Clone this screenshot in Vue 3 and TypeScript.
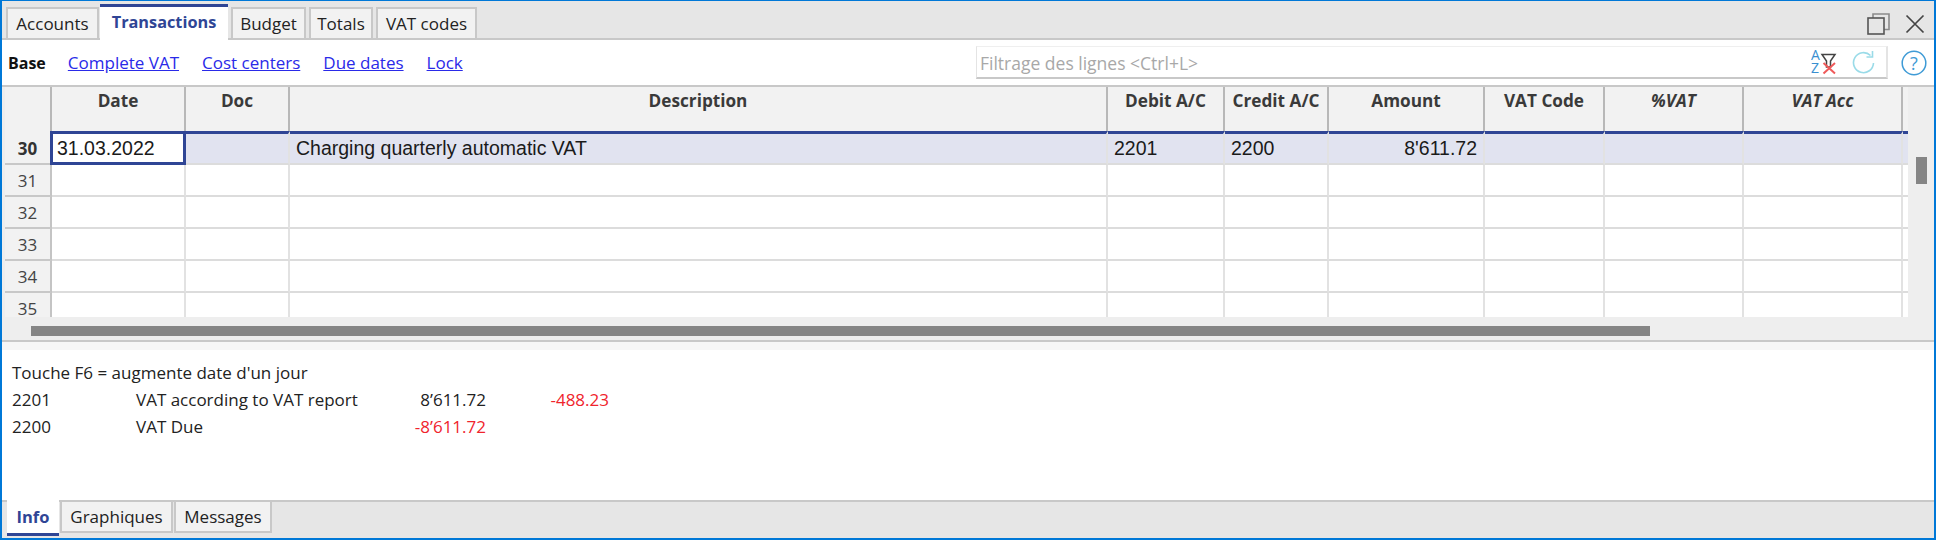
<template>
  <div class="app">
    <div class="tabbar">
      <div class="tabs">
        <div
          v-for="t in topTabs"
          :key="t.name"
          class="tab"
          :class="{ active: t.name === 'Transactions' }"
          :style="{ width: t.w + 'px' }"
        >
          {{ t.name }}
        </div>
      </div>
      <div class="win-icons">
        <svg width="23" height="22" viewBox="0 0 23 22" fill="none">
          <path d="M6 5V1H22V16.5H17" stroke="#8a8a8a" stroke-width="1.6" />
          <rect x="1" y="5" width="16" height="16" stroke="#555" stroke-width="1.6" />
        </svg>
        <svg width="20" height="20" viewBox="0 0 20 20" fill="none">
          <path d="M1.5 1.5L18.5 18.5M18.5 1.5L1.5 18.5" stroke="#444" stroke-width="1.7" />
        </svg>
      </div>
    </div>

    <div class="subnav">
      <b class="base">Base</b>
      <a v-for="l in links" :key="l" class="link">{{ l }}</a>
      <div class="filter">
        <span class="ph">Filtrage des lignes &lt;Ctrl+L&gt;</span>
        <svg class="az" width="26" height="32" viewBox="0 -5 26 32" fill="none">
          <text x="0" y="9" class="az-t">A</text>
          <text x="0" y="22" class="az-t">Z</text>
          <path d="M11 3.5H24L19.5 10V16H15.5V10Z" stroke="#444" stroke-width="1.5" fill="#fff" />
          <path d="M12.5 12L24 22.5M24 12L12.5 22.5" stroke="#ef5a5a" stroke-width="2" />
        </svg>
        <svg class="refresh" width="24" height="24" viewBox="0 0 24 24" fill="none">
          <path d="M18.5 5.5A10 10 0 1 0 21.5 13" stroke="#9adbe8" stroke-width="1.6" />
          <path d="M20.5 1V7H14.5" stroke="#9adbe8" stroke-width="1.6" />
        </svg>
      </div>
      <svg class="help" width="26" height="26" viewBox="0 0 26 26" fill="none">
        <circle cx="13" cy="13" r="11.8" stroke="#3f9bd6" stroke-width="1.5" />
        <text x="13" y="19.5" text-anchor="middle" class="help-t">?</text>
      </svg>
    </div>

    <div class="sheet">
      <div class="sheet-top">
        <div class="table">
          <div class="row head">
            <div class="cell num"></div>
            <div v-for="c in columns" :key="c.label" class="cell" :class="{ it: c.italic }">{{ c.label }}</div>
            <div class="cell tail"></div>
          </div>
          <div class="row current">
            <div class="cell num">30</div>
            <div class="cell date">31.03.2022</div>
            <div class="cell"></div>
            <div class="cell">Charging quarterly automatic VAT</div>
            <div class="cell">2201</div>
            <div class="cell">2200</div>
            <div class="cell right">8'611.72</div>
            <div class="cell"></div>
            <div class="cell"></div>
            <div class="cell"></div>
            <div class="cell tail"></div>
          </div>
          <div v-for="n in emptyRows" :key="n" class="row">
            <div class="cell num">{{ n }}</div>
            <div v-for="c in columns" :key="c.label" class="cell"></div>
            <div class="cell tail"></div>
          </div>
        </div>
        <div class="vscroll"><div class="vthumb"></div></div>
      </div>
      <div class="hscroll"><div class="hthumb"></div></div>
    </div>

    <div class="splitter"></div>

    <div class="info">
      <div class="hint">Touche F6 = augmente date d'un jour</div>
      <div v-for="r in infoRows" :key="r.code" class="info-row">
        <span>{{ r.code }}</span>
        <span>{{ r.desc }}</span>
        <span class="right" :class="{ red: r.amount.startsWith('-') }">{{ r.amount }}</span>
        <span class="right red">{{ r.bal }}</span>
      </div>
    </div>

    <div class="bottom">
      <div
        v-for="t in bottomTabs"
        :key="t.name"
        class="btab"
        :class="{ active: t.name === 'Info' }"
        :style="{ width: t.w + 'px' }"
      >
        {{ t.name }}
      </div>
    </div>
  </div>
</template>

<script setup lang="ts">
const topTabs = [
  { name: 'Accounts', w: 93 },
  { name: 'Transactions', w: 128 },
  { name: 'Budget', w: 75 },
  { name: 'Totals', w: 64 },
  { name: 'VAT codes', w: 101 },
];
const links = ['Complete VAT', 'Cost centers', 'Due dates', 'Lock'];
const columns = [
  { label: 'Date' },
  { label: 'Doc' },
  { label: 'Description' },
  { label: 'Debit A/C' },
  { label: 'Credit A/C' },
  { label: 'Amount' },
  { label: 'VAT Code' },
  { label: '%VAT', italic: true },
  { label: 'VAT Acc', italic: true },
];
const emptyRows = [31, 32, 33, 34, 35];
const infoRows = [
  { code: '2201', desc: 'VAT according to VAT report', amount: '8’611.72', bal: '-488.23' },
  { code: '2200', desc: 'VAT Due', amount: '-8’611.72', bal: '' },
];
const bottomTabs = [
  { name: 'Info', w: 52 },
  { name: 'Graphiques', w: 113 },
  { name: 'Messages', w: 98 },
];
</script>

<style>
html,
body {
  margin: 0;
  background: #fff;
}
</style>

<style scoped>
.app {
  width: 1936px;
  height: 540px;
  box-sizing: border-box;
  border: 2px solid #0078d7;
  border-top-width: 1px;
  display: flex;
  flex-direction: column;
  overflow: hidden;
  background: #fff;
  color: #222;
  font-family: 'Open Sans', 'Noto Sans', sans-serif;
  font-size: 17px;
}
.tabbar {
  height: 39px;
  flex: none;
  box-sizing: border-box;
  background: #e6e6e6;
  border-bottom: 2px solid #c8c8c8;
  display: flex;
  justify-content: space-between;
}
.tabs {
  display: flex;
  align-items: flex-end;
  gap: 3px;
  padding-left: 4px;
}
.tab {
  box-sizing: border-box;
  height: 33px;
  margin-bottom: -2px;
  background: #f2f2f2;
  border: 2px solid #c8c8c8;
  text-align: center;
  line-height: 29px;
  white-space: nowrap;
}
.tab.active {
  height: 36px;
  margin-left: -2px;
  background: #fff;
  border: none;
  border-top: 3px solid #2f4595;
  color: #2f4595;
  font-size: 16.3px;
  font-weight: 700;
  line-height: 31px;
}
.win-icons {
  display: flex;
  align-items: center;
  gap: 15px;
  padding: 8px 9px 0 0;
}
.subnav {
  height: 45px;
  flex: none;
  box-sizing: border-box;
  display: flex;
  align-items: center;
  padding-left: 6px;
}
.base {
  font-size: 16px;
  font-weight: 700;
  color: #111;
  margin-right: 22px;
}
.link {
  color: #2a2ae8;
  text-decoration: underline;
  margin-right: 23px;
}
.filter {
  margin-left: auto;
  width: 912px;
  height: 33px;
  box-sizing: border-box;
  border-top: 1px solid #efefef;
  border-right: 2px solid #e4e4e4;
  border-bottom: 2px solid #c8c8c8;
  border-left: 1px solid #e4e4e4;
  display: flex;
  align-items: center;
  padding-left: 3px;
}
.ph {
  color: #a8a8a8;
  font-size: 17.5px;
  padding-top: 1px;
  flex: 1;
}
.az {
  margin: -2px 15px -2px 0;
}
.az-t {
  font-family: 'Open Sans', sans-serif;
  font-size: 14px;
  fill: #3a8fd0;
}
.refresh {
  margin-right: 10px;
}
.help {
  margin: 0 7px 0 13px;
}
.help-t {
  font-family: 'Open Sans', sans-serif;
  font-size: 18px;
  fill: #3f9bd6;
}
.sheet {
  height: 257px;
  flex: none;
  box-sizing: border-box;
  background: #eee;
  border-top: 2px solid #c8c8c8;
  border-bottom: 2px solid #c8c8c8;
  padding-left: 3px;
}
.sheet-top {
  display: flex;
  height: 230px;
}
.table {
  width: 1903px;
  flex: none;
  overflow: hidden;
  background: #fff;
}
.row {
  display: grid;
  grid-template-columns: 47px 134px 104px 818px 117px 104px 156px 120px 139px 159px 5px;
  grid-template-rows: minmax(0, 1fr);
  height: 32px;
}
.cell {
  box-sizing: border-box;
  border-right: 2px solid #e2e2e2;
  border-bottom: 2px solid #dcdcdc;
  padding: 0 6px;
  line-height: 30px;
  font-family: 'Liberation Sans', Arial, sans-serif;
  font-size: 19.5px;
  color: #1a1a1a;
  white-space: nowrap;
}
.cell.tail {
  padding: 0;
  border-right: none;
}
.cell.right {
  text-align: right;
}
.cell.num {
  background: #f2f2f2;
  border-right: 2px solid #c4c4c4;
  border-bottom: 2px solid #c8c8c8;
  text-align: center;
  line-height: 32px;
  font-family: 'Open Sans', sans-serif;
  font-size: 17px;
  color: #444;
}
.head {
  height: 44px;
}
.head .cell {
  background: #f2f2f2;
  border-right: 2px solid #b8b8b8;
  border-bottom: none;
  text-align: center;
  line-height: 28px;
  font-family: 'Open Sans', sans-serif;
  font-size: 17.2px;
  font-weight: 700;
  color: #3a3a3a;
}
.head .cell.it {
  font-style: italic;
}
.head .cell.tail {
  background: #f2f2f2;
  border-right: none;
}
.current {
  height: 34px;
}
.current .cell {
  background: #e1e3f0;
  border-top: 3px solid #2f4595;
  line-height: 29px;
}
.current .cell.num {
  background: #f2f2f2;
  border-top: none;
  line-height: 35px;
  font-weight: 700;
  color: #333;
}
.current .cell.tail {
  background: #e1e3f0;
}
.current .cell.date {
  background: #fff;
  margin-left: -2px;
  border: 3px solid #2f4595;
  padding: 0 4px;
  line-height: 28px;
}
.vscroll {
  flex: 1;
  padding: 70px 0 0 8px;
}
.vthumb {
  width: 11px;
  height: 27px;
  background: #858585;
}
.hscroll {
  height: 23px;
  padding: 9px 0 0 26px;
  box-sizing: border-box;
}
.hthumb {
  width: 1619px;
  height: 10px;
  background: #858585;
}
.splitter {
  height: 8px;
  flex: none;
  background: #f6f6f6;
}
.info {
  flex: 1;
  padding: 9px 0 0 10px;
  line-height: 27px;
  color: #222;
}
.info-row {
  display: grid;
  grid-template-columns: 124px 240px 110px 123px;
  white-space: nowrap;
}
.info-row .right {
  text-align: right;
}
.info-row .red {
  color: #f0242c;
}
.bottom {
  height: 38px;
  flex: none;
  box-sizing: border-box;
  background: #e6e6e6;
  border-top: 2px solid #c8c8c8;
  display: flex;
  gap: 1px;
  padding-left: 5px;
}
.btab {
  box-sizing: border-box;
  height: 33px;
  margin-top: -2px;
  background: #f2f2f2;
  border: 2px solid #c8c8c8;
  text-align: center;
  line-height: 29px;
}
.btab.active {
  height: 36px;
  background: #fff;
  border: none;
  border-bottom: 3px solid #2f4595;
  color: #2f4595;
  font-size: 16.5px;
  font-weight: 700;
  line-height: 33px;
}
</style>
